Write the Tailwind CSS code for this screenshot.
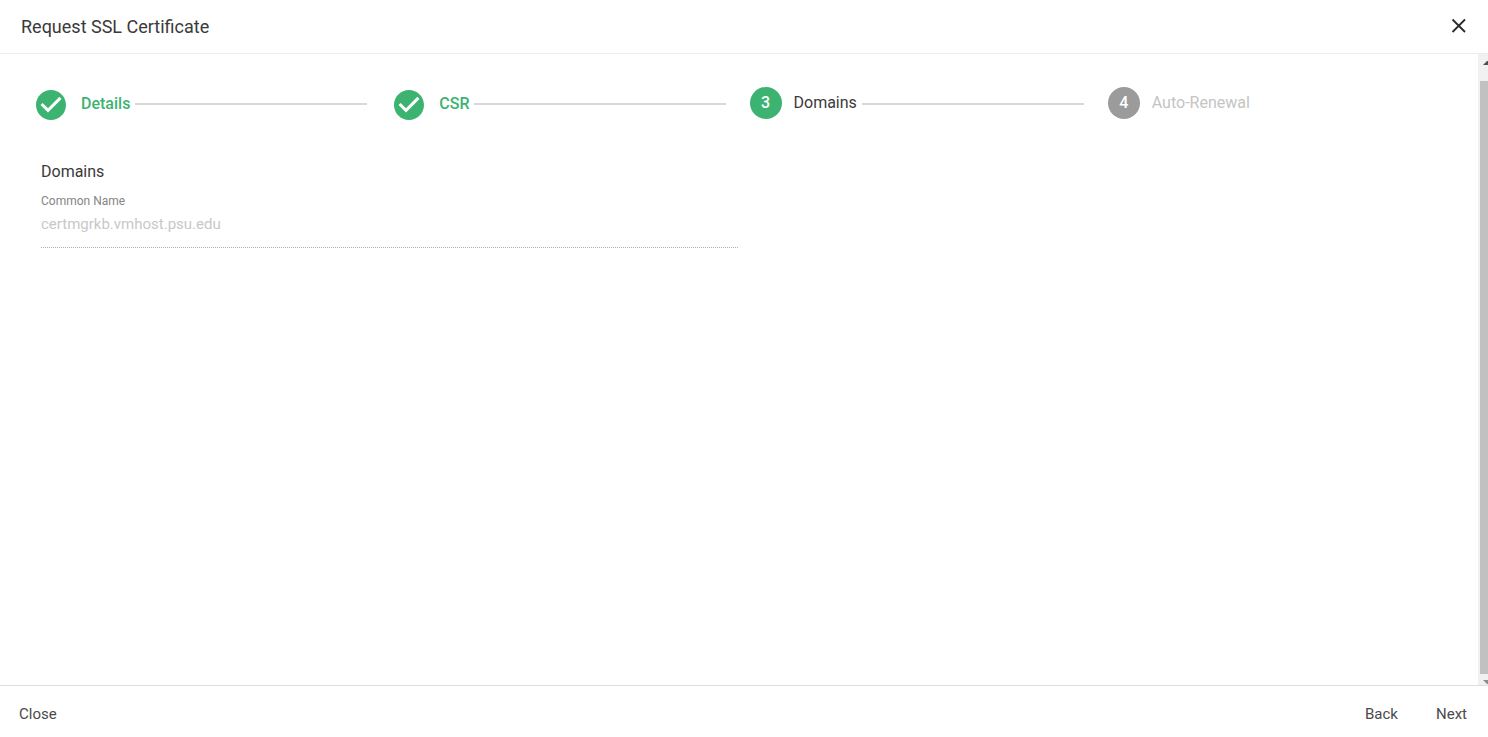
<!DOCTYPE html>
<html lang="en">
<head>
<meta charset="utf-8">
<meta name="viewport" content="width=device-width, initial-scale=1">
<title>Request SSL Certificate</title>
<script src="https://cdn.jsdelivr.net/npm/@tailwindcss/browser@4"></script>
</head>
<body class="flex h-screen flex-col overflow-hidden bg-white font-[Roboto,sans-serif] text-[#3a3a3a]">
<header class="flex shrink-0 items-start justify-between border-b border-[#ececec] pt-[13px] pr-5 pb-3 pl-[21px]">
  <h1 class="text-lg leading-7">Request SSL Certificate</h1>
  <button type="button" aria-label="Close dialog" class="mt-[3px] flex size-5 items-center justify-center">
    <svg class="size-5" viewBox="0 0 20 20" fill="none" stroke="#2a2a2a" stroke-width="1.800" aria-hidden="true"><path d="M4.500 3.500 17 16M17 3.500 4.500 16"/></svg>
  </button>
</header>
<div class="flex min-h-0 flex-1">
  <main class="min-w-0 flex-1 pt-8 pr-9 pl-[33px]">
    <ol class="grid grid-cols-4 gap-6 text-base">
      <li class="flex h-9 items-center font-medium text-[#3cb371]">
        <svg class="mt-0.5 mr-3 size-9 shrink-0" viewBox="0 0 24 24" fill="currentColor" aria-hidden="true"><path d="M12 2C6.480 2 2 6.480 2 12s4.480 10 10 10 10-4.480 10-10S17.520 2 12 2zm-2 15l-5-5 1.410-1.410L10 14.170l7.590-7.590L19 8l-9 9z"/></svg>
        <span>Details</span><span class="ml-[5px] h-[2px] flex-1 bg-[#d8d8d8]"></span>
      </li>
      <li class="flex h-9 items-center font-medium text-[#3cb371]">
        <svg class="mt-0.5 mr-3 size-9 shrink-0" viewBox="0 0 24 24" fill="currentColor" aria-hidden="true"><path d="M12 2C6.480 2 2 6.480 2 12s4.480 10 10 10 10-4.480 10-10S17.520 2 12 2zm-2 15l-5-5 1.410-1.410L10 14.170l7.590-7.590L19 8l-9 9z"/></svg>
        <span>CSR</span><span class="ml-[5px] h-[2px] flex-1 bg-[#d8d8d8]"></span>
      </li>
      <li class="flex h-9 items-center" aria-current="step">
        <span class="mr-3 mb-0.5 flex size-8 shrink-0 items-center justify-center rounded-full bg-[#3cb371] font-medium text-white">3</span>
        <span class="mb-0.5">Domains</span><span class="ml-[5px] h-[2px] flex-1 bg-[#d8d8d8]"></span>
      </li>
      <li class="flex h-9 items-center text-[#c4c4c4]">
        <span class="mr-3 mb-0.5 flex size-8 shrink-0 items-center justify-center rounded-full bg-[#9b9b9b] font-medium text-white">4</span>
        <span class="mb-0.5">Auto-Renewal</span>
      </li>
    </ol>
    <section class="w-1/2 pt-[38px] pl-2">
      <h2 class="text-base leading-6">Domains</h2>
      <label for="common-name" class="mt-[9px] block text-xs leading-4 text-[#858585]">Common Name</label>
      <input id="common-name" type="text" disabled value="certmgrkb.vmhost.psu.edu" class="block h-[39px] w-full border-b border-dotted border-[#b0b0b0] bg-transparent pb-[9px] text-[15px] text-[#c8c8c8]">
    </section>
  </main>
  <div class="flex w-[10px] shrink-0 flex-col overflow-hidden bg-[#f1f1f1]" aria-hidden="true">
    <svg class="h-[27px] w-[10px] shrink-0" viewBox="0 0 10 27" fill="#505050"><path d="M5 11h5V7H9z"/></svg>
    <div class="ml-[2px] flex-1 bg-[#c1c1c1]"></div>
    <svg class="h-[11px] w-[10px] shrink-0" viewBox="0 0 10 11" fill="#8c8c8c"><path d="M5 6h5v4H9z"/></svg>
  </div>
</div>
<footer class="flex shrink-0 items-center justify-between border-t border-[#dedede] pt-4 pr-[21px] pb-[11px] pl-[19px] text-[15px] leading-6 text-[#4a4a4a]">
  <button type="button">Close</button>
  <div class="flex gap-[38px]">
    <button type="button">Back</button>
    <button type="button">Next</button>
  </div>
</footer>
</body>
</html>
